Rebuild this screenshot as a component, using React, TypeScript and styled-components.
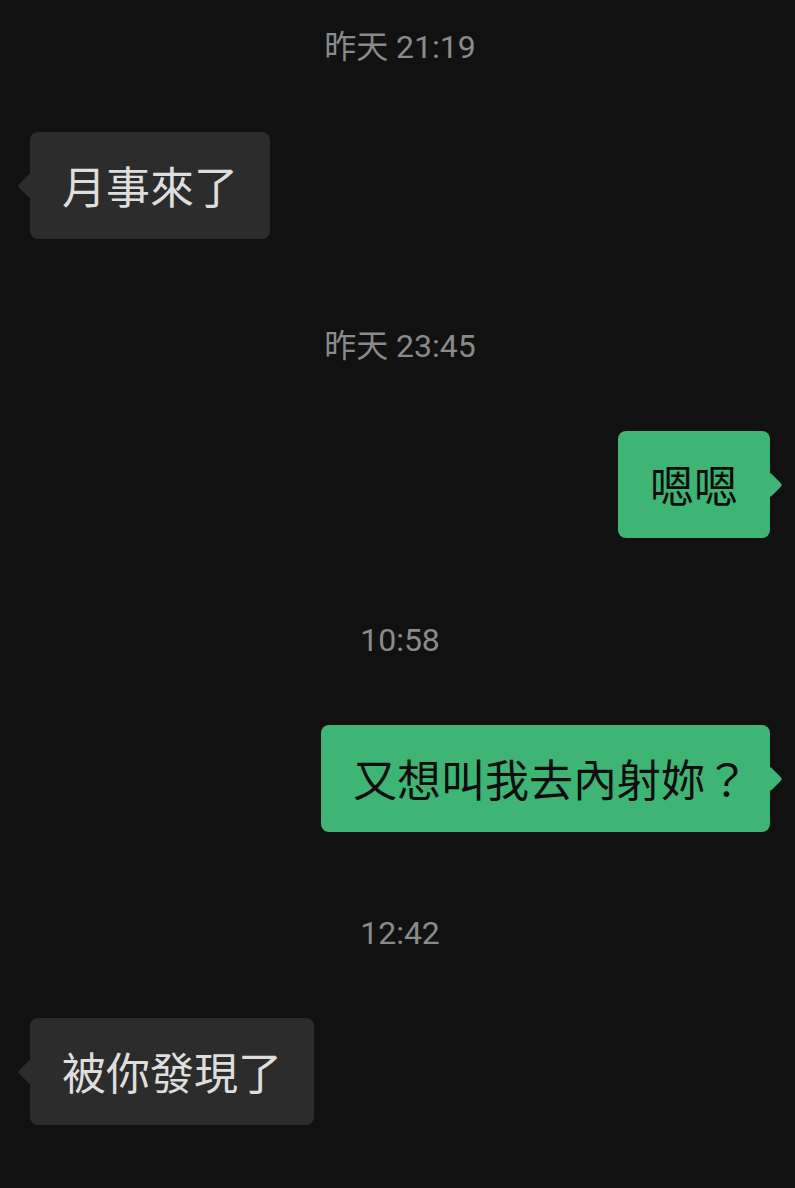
import React from "react"
import styled, { createGlobalStyle } from "styled-components"

type Message = {
	stamp: string
	text: string
	mine: boolean
	gap: number // space above the timestamp
}

const messages: Message[] = [
	{ stamp: "昨天 21:19", text: "月事來了", mine: false, gap: 0 },
	{ stamp: "昨天 23:45", text: "嗯嗯", mine: true, gap: 87 },
	{ stamp: "10:58", text: "又想叫我去內射妳？", mine: true, gap: 82 },
	{ stamp: "12:42", text: "被你發現了", mine: false, gap: 81 },
]

const GlobalStyle = createGlobalStyle`
	html, body {
		margin: 0;
		padding: 0;
		background-color: #111111;
	}
	body {
		font-family: "Noto Sans CJK TC", "Noto Sans", sans-serif;
	}
`

const Chat = styled.div`
	min-height: 1188px;
	box-sizing: border-box;
	padding: 27px 25px 0 30px;
	display: flex;
	flex-direction: column;
	background-color: #111111;
`

const Stamp = styled.div<{ $gap: number }>`
	margin-top: ${(props) => props.$gap}px;
	height: 40px;
	line-height: 40px;
	text-align: center;
	font-family: Roboto, "Noto Sans CJK TC", sans-serif;
	font-size: 32px;
	color: #8a8a8a;
`

const Row = styled.div<{ $mine: boolean }>`
	margin-top: 65px;
	display: flex;
	justify-content: ${(props) => (props.$mine ? "flex-end" : "flex-start")};
`

const Bubble = styled.div<{ $mine: boolean }>`
	position: relative;
	padding: 24px 32px;
	border-radius: 8px;
	font-family: "Noto Sans CJK TC", sans-serif;
	font-size: 44px;
	line-height: 59px;
	white-space: nowrap;
	background-color: ${(props) => (props.$mine ? "#3eb575" : "#2c2c2c")};
	color: ${(props) => (props.$mine ? "#0d0d0d" : "#dedede")};
	&::before {
		content: "";
		position: absolute;
		top: 50%;
		width: 18px;
		height: 18px;
		border-radius: 3px;
		background-color: inherit;
		transform: translateY(-50%) rotate(45deg);
		${(props) => (props.$mine ? "right: -9px;" : "left: -9px;")}
	}
`

// trailing full-width punctuation is trimmed at the line end
const Trailing = styled.span`
	margin-right: -11px;
`

const renderText = (text: string) => {
	const last = text.slice(-1)
	if ("？！。".includes(last)) {
		return (
			<>
				{text.slice(0, -1)}
				<Trailing>{last}</Trailing>
			</>
		)
	}
	return text
}

const App = () => {
	return (
		<>
			<GlobalStyle />
			<Chat>
				{messages.map((message, index) => (
					<React.Fragment key={index}>
						<Stamp $gap={message.gap}>{message.stamp}</Stamp>
						<Row $mine={message.mine}>
							<Bubble $mine={message.mine}>{renderText(message.text)}</Bubble>
						</Row>
					</React.Fragment>
				))}
			</Chat>
		</>
	)
}

export default App
